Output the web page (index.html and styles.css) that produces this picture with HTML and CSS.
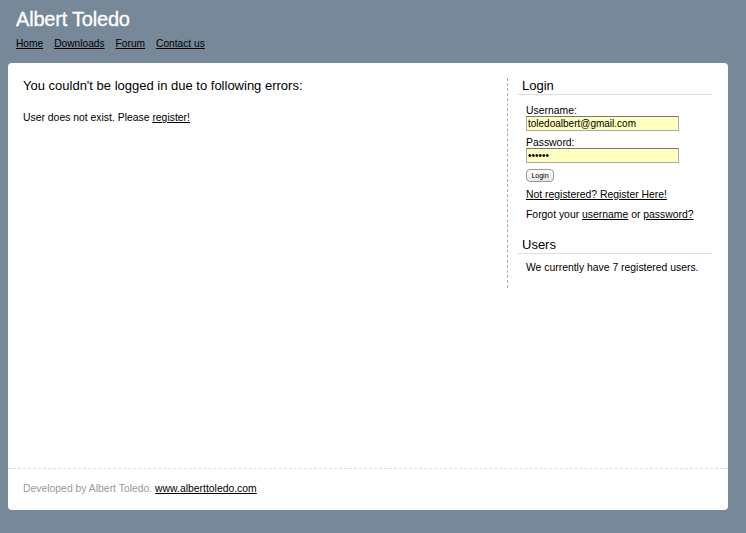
FILE: index.html
```html
<!DOCTYPE html>
<html>
<head>
<meta charset="utf-8">
<title>Albert Toledo</title>
<link rel="stylesheet" href="styles.css">
</head>
<body>
<div class="header">
  <h1 class="site-title">Albert Toledo</h1>
  <nav class="nav">
    <a href="#">Home</a>
    <a href="#">Downloads</a>
    <a href="#">Forum</a>
    <a href="#">Contact us</a>
  </nav>
</div>
<div class="box">
  <div class="content">
    <div class="main">
      <h2 class="main-title">You couldn't be logged in due to following errors:</h2>
      <p class="msg">User does not exist. Please <a href="#">register!</a></p>
    </div>
    <div class="sidebar">
      <h3 class="side-title">Login</h3>
      <form class="login">
        <label class="lbl">Username:</label>
        <input class="field" type="text" value="toledoalbert@gmail.com">
        <label class="lbl lbl2">Password:</label>
        <input class="field" type="password" value="aaaaaa">
        <button class="btn" type="button">Login</button>
      </form>
      <p class="side-text reg"><a href="#">Not registered? Register Here!</a></p>
      <p class="side-text">Forgot your <a href="#">username</a> or <a href="#">password?</a></p>
      <h3 class="side-title users">Users</h3>
      <p class="side-text">We currently have 7 registered users.</p>
    </div>
  </div>
  <div class="footer">
    <span class="dev">Developed by Albert Toledo.</span> <a href="#">www.alberttoledo.com</a>
  </div>
</div>
</body>
</html>
```
FILE: styles.css
```css
html, body {
  margin: 0;
  padding: 0;
}
body {
  background: #778899;
  font-family: "Liberation Sans", Arial, sans-serif;
  color: #000;
  width: 746px;
  height: 533px;
  overflow: hidden;
}
a {
  color: #000;
  text-decoration: underline;
}
.header {
  padding: 8px 0 0 16px;
  height: 63px;
  box-sizing: border-box;
}
.site-title {
  margin: 0;
  font-size: 20px;
  font-weight: normal;
  letter-spacing: -0.2px;
  color: #fff;
  line-height: 22px;
  -webkit-text-stroke: 0.3px #fff;
}
.nav {
  margin-top: 8px;
  font-size: 10.2px;
  line-height: 12px;
  display: flex;
  gap: 11px;
}
.box {
  margin: 0 18px 0 8px;
  background: #fff;
  border-radius: 4px;
  height: 447px;
  display: flex;
  flex-direction: column;
}
.content {
  flex: 1;
  display: flex;
  padding: 15px 16px 0 15px;
}
.main {
  flex: 1;
}
.main-title {
  margin: 0;
  font-size: 13px;
  font-weight: normal;
  line-height: 15px;
}
.msg {
  margin: 19px 0 0;
  font-size: 10.4px;
  line-height: 12px;
}
.sidebar {
  width: 194px;
  border-left: 1px dashed #aaa;
  padding-left: 10px;
  height: 210px;
  font-size: 10.4px;
}
.side-title {
  margin: 0;
  font-size: 13px;
  font-weight: normal;
  line-height: 16px;
  padding: 0 0 0 4px;
  border-bottom: 1px solid #ddd;
}
.users {
  margin-top: 16px;
}
.login {
  display: flex;
  flex-direction: column;
  align-items: flex-start;
  padding-left: 8px;
  margin-top: 10px;
}
.lbl {
  line-height: 11px;
  font-size: 10.4px;
}
.lbl2 {
  margin-top: 6px;
}
.field {
  width: 153px;
  height: 15px;
  box-sizing: border-box;
  border: 1px solid #aaa;
  border-top-color: #777;
  background: #ffffc0;
  font-family: "Liberation Sans", Arial, sans-serif;
  font-size: 10px;
  padding: 0 1px;
  margin: 0;
}
.btn {
  margin-top: 6px;
  width: 28px;
  height: 13px;
  padding: 0;
  font-family: "Liberation Sans", Arial, sans-serif;
  font-size: 7px;
  line-height: 11px;
  border: 1px solid #999;
  border-radius: 4px;
  background: linear-gradient(#fff, #e6e6e6);
  color: #000;
}
.side-text {
  margin: 8px 0 0 8px;
  line-height: 12px;
}
.reg {
  margin-top: 7px;
}
.footer {
  border-top: 1px dashed #ddd;
  padding: 14px 0 15px 15px;
  font-size: 10.4px;
  line-height: 12px;
}
.dev {
  color: #999;
}
```
